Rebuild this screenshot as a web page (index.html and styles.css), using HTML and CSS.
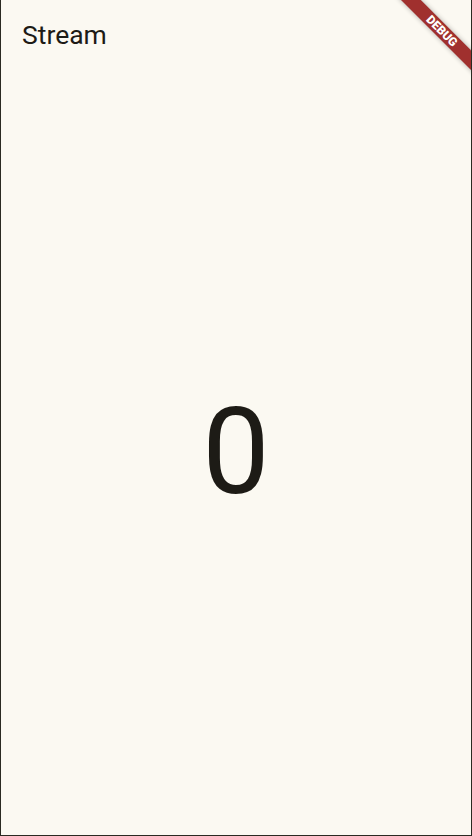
FILE: index.html
```html
<!DOCTYPE html>
<html>
<head>
<meta charset="utf-8">
<link rel="stylesheet" href="styles.css">
</head>
<body>
<div class="screen">
  <header class="appbar"><span class="title">Stream</span></header>
  <main class="body"><span class="counter">0</span></main>
  <div class="banner"><span>DEBUG</span></div>
</div>
</body>
</html>
```
FILE: styles.css
```css
html, body {
  margin: 0;
  padding: 0;
  width: 472px;
  height: 836px;
  overflow: hidden;
}
.screen {
  position: relative;
  box-sizing: border-box;
  width: 472px;
  height: 836px;
  background: #fbf9f2;
  border-left: 1px solid #2a2a22;
  border-right: 1px solid #2a2a22;
  border-bottom: 1px solid #2a2a22;
  display: flex;
  flex-direction: column;
  overflow: hidden;
  font-family: Roboto, "Noto Sans", sans-serif;
  color: #1d1b16;
}
.appbar {
  box-sizing: border-box;
  height: 64px;
  flex: none;
  padding: 22px 0 0 21px;
}
.title {
  display: block;
  font-size: 26.5px;
  line-height: 26.5px;
}
.body {
  flex: 1;
  display: flex;
  align-items: center;
  justify-content: center;
  padding-top: 5px;
}
.counter {
  font-size: 120px;
  line-height: 1;
}
.banner {
  position: absolute;
  left: 386px;
  top: 24px;
  width: 110px;
  height: 13.5px;
  background: #a0302e;
  transform: rotate(45deg);
  display: flex;
  align-items: center;
  justify-content: center;
  box-shadow: 0 0 5px rgba(0,0,0,0.3);
}
.banner span {
  color: #fff;
  font-size: 12px;
  font-weight: 900;
  line-height: 1;
}
```
